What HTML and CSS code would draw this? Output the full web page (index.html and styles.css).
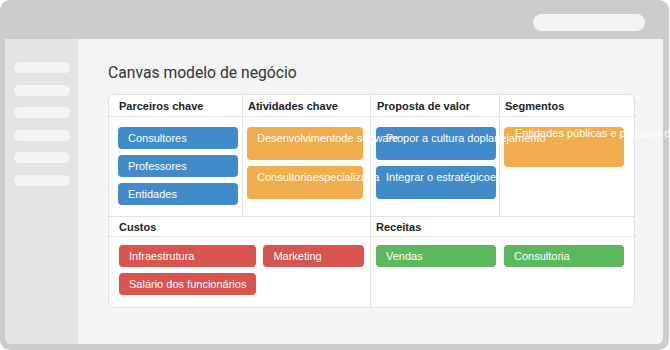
FILE: index.html
```html
<!DOCTYPE html>
<html lang="pt">
<head>
<meta charset="utf-8">
<title>Canvas modelo de negócio</title>
<link rel="stylesheet" href="styles.css">
</head>
<body>
<div class="window">
  <div class="topbar"><div class="search"></div></div>
  <div class="app">
    <aside class="sidebar">
      <span class="nav-pill"></span>
      <span class="nav-pill"></span>
      <span class="nav-pill"></span>
      <span class="nav-pill"></span>
      <span class="nav-pill"></span>
      <span class="nav-pill"></span>
    </aside>
    <main class="main">
      <h1 class="title">Canvas modelo de negócio</h1>
      <div class="canvas">
        <div class="row head">
          <div class="cell c1">Parceiros chave</div>
          <div class="cell c2">Atividades chave</div>
          <div class="cell c3">Proposta de valor</div>
          <div class="cell c4">Segmentos</div>
        </div>
        <div class="row body">
          <div class="cell c1">
            <div class="box blue"><span class="txt">Consultores</span></div>
            <div class="box blue"><span class="txt">Professores</span></div>
            <div class="box blue"><span class="txt">Entidades</span></div>
          </div>
          <div class="cell c2">
            <div class="box orange tall"><span class="txt">Desenvolvimentode software</span></div>
            <div class="box orange tall"><span class="txt">Consultoriaespecializada</span></div>
          </div>
          <div class="cell c3">
            <div class="box blue tall"><span class="txt">Propor a cultura doplanejamento</span></div>
            <div class="box blue tall"><span class="txt">Integrar o estratégicoe operacional</span></div>
          </div>
          <div class="cell c4">
            <div class="box orange taller"><span class="txt">Entidades públicas e privadas de ensino</span></div>
          </div>
        </div>
        <div class="row head2">
          <div class="cell wide left">Custos</div>
          <div class="cell wide right">Receitas</div>
        </div>
        <div class="row body2">
          <div class="cell wide left costs">
            <div class="box red"><span class="txt">Infraestrutura</span></div>
            <div class="box red"><span class="txt">Marketing</span></div>
            <div class="box red"><span class="txt">Salário dos funcionários</span></div>
          </div>
          <div class="cell wide right revenue">
            <div class="box green"><span class="txt">Vendas</span></div>
            <div class="box green"><span class="txt">Consultoria</span></div>
          </div>
        </div>
      </div>
    </main>
  </div>
</div>
</body>
</html>
```

FILE: styles.css
```css
html {
  overflow: hidden;
}

body {
  margin: 0;
  background: #ffffff;
  font-family: "Liberation Sans", Arial, sans-serif;
  font-size: 11px;
}

.window {
  width: 669px;
  height: 350px;
  box-sizing: border-box;
  background: #cccccc;
  border-radius: 10px;
  padding: 0 6px 6px 5px;
  display: flex;
  flex-direction: column;
}

.topbar {
  height: 39px;
  flex: none;
  box-sizing: border-box;
  display: flex;
  justify-content: flex-end;
  align-items: flex-start;
  padding: 14px 18px 0 0;
}

.search {
  width: 112px;
  height: 17px;
  border-radius: 9px;
  background: #f4f4f4;
}

.app {
  flex: 1;
  display: flex;
}

.sidebar {
  width: 73px;
  flex: none;
  box-sizing: border-box;
  background: #e4e4e4;
  border-bottom-left-radius: 6px;
  padding: 23px 0 0 9px;
  display: flex;
  flex-direction: column;
  gap: 11.5px;
}

.nav-pill {
  display: block;
  width: 56px;
  height: 11px;
  border-radius: 6px;
  background: #f4f4f4;
}

.main {
  flex: 1;
  background: #f4f4f4;
  border-bottom-right-radius: 6px;
  padding: 24px 0 0 30px;
}

.title {
  margin: 0 0 12px;
  font-family: Roboto, "Liberation Sans", sans-serif;
  font-size: 15.7px;
  font-weight: 400;
  line-height: 19px;
  color: #333333;
}

.canvas {
  width: 527px;
  box-sizing: border-box;
  background: #ffffff;
  border: 1px solid #e1e1e1;
  border-radius: 6px;
}

.row {
  display: grid;
  grid-template-columns: 133px 128px 129px 135px;
}

.cell {
  box-sizing: border-box;
}

.cell + .cell {
  border-left: 1px solid #e1e1e1;
}

.wide {
  grid-column: span 2;
}

/* headers */
.head,
.head2 {
  border-bottom: 1px solid #e1e1e1;
  font-weight: 700;
  color: #222222;
}

.head .cell {
  padding-top: 5px;
  padding-bottom: 3px;
  line-height: 13px;
}

.head .c1 { padding-left: 10px; }
.head .c2 { padding-left: 5px; }
.head .c3 { padding-left: 6px; }
.head .c4 { padding-left: 5px; }

.head2 .cell {
  padding-top: 3px;
  padding-bottom: 2px;
  line-height: 14px;
}

.head2 .left { padding-left: 10px; }
.head2 .right { padding-left: 5px; }

/* top body */
.body {
  border-bottom: 1px solid #e1e1e1;
}

.body .cell {
  padding-top: 10px;
  padding-bottom: 11px;
  display: flex;
  flex-direction: column;
  gap: 6px;
}

.body .c1 { padding-left: 9px; padding-right: 4px; }
.body .c2 { padding-left: 4px; padding-right: 7px; }
.body .c3 { padding-left: 5px; padding-right: 3px; }
.body .c4 { padding-left: 4px; padding-right: 10px; }

/* bottom body */
.body2 .cell {
  padding-top: 8px;
  padding-bottom: 12px;
}

.costs {
  display: grid;
  grid-template-columns: max-content 1fr;
  align-content: start;
  gap: 6px 7px;
  padding-left: 10px;
  padding-right: 6px;
}

.revenue {
  display: grid;
  grid-template-columns: 120px 120px;
  align-content: start;
  column-gap: 8px;
  padding-left: 5px;
}

/* boxes */
.box {
  height: 22px;
  box-sizing: border-box;
  padding: 5px 10px 4px;
  border-radius: 4px;
  line-height: 13px;
  color: #ffffff;
  white-space: nowrap;
}

.box.tall {
  height: 33px;
}

.box.taller {
  height: 40px;
  padding-top: 0;
  padding-left: 11px;
}

.txt {
  position: relative;
}

.blue { background: #428bca; }
.orange { background: #f0ad4e; }
.red { background: #d9534f; }
.green { background: #5cb85c; }
```
